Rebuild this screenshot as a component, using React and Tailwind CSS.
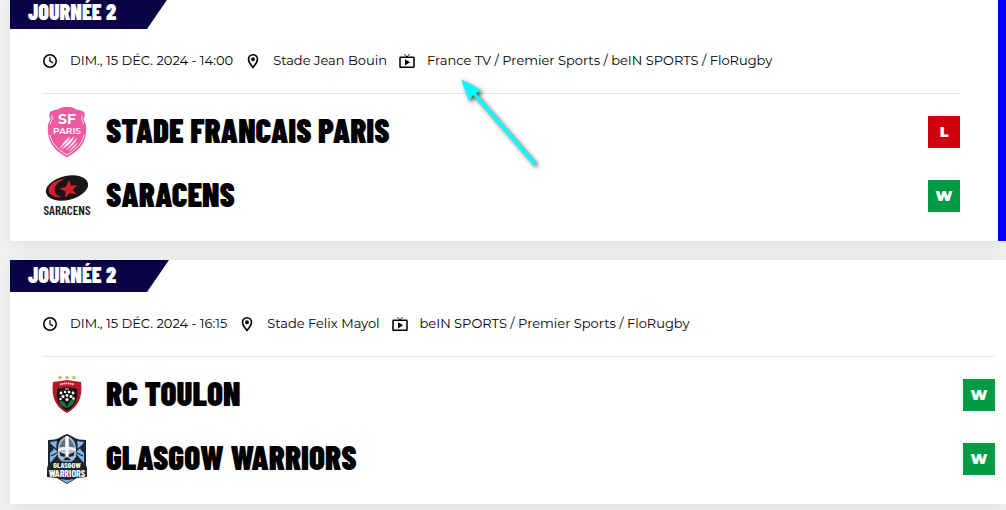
import React from 'react';
import clsx from 'clsx';

const ClockIcon = () => (
  <svg viewBox="0 0 24 24" className="size-4 shrink-0" fill="currentColor" aria-hidden="true">
    <path d="M12 1.500a10.500 10.500 0 1 0 0 21 10.500 10.500 0 0 0 0-21Zm0 18.700a8.200 8.200 0 1 1 0-16.400 8.200 8.200 0 0 1 0 16.400Z" />
    <path d="M11 6.500h1.900v5.300l4.200 2.600-.9 1.500-5.200-3.200Z" />
  </svg>
);

const PinIcon = () => (
  <svg viewBox="0 0 24 24" className="size-4 shrink-0" aria-hidden="true">
    <path
      d="M12 2.600c-4 0-6.700 3-6.700 6.600 0 4.600 6.700 12.300 6.700 12.300s6.700-7.700 6.700-12.300c0-3.600-2.700-6.600-6.700-6.600Z"
      fill="none"
      stroke="currentColor"
      strokeWidth="2.500"
    />
    <circle cx="12" cy="9.300" r="2.900" fill="currentColor" />
  </svg>
);

const TvIcon = () => (
  <svg viewBox="0 0 24 24" className="size-4 shrink-0" fill="none" stroke="currentColor" aria-hidden="true">
    <rect x="1.500" y="6.500" width="21" height="15" rx="1" strokeWidth="2.300" />
    <path d="M8 1.500l4 4.500 4-4.500" strokeWidth="1.300" />
    <path d="M9 9.300v9.400l7.500-4.700Z" fill="currentColor" stroke="none" />
  </svg>
);

const StadeFrancaisLogo = () => (
  <svg viewBox="0 0 48 52" className="h-13 w-12" role="img" aria-label="Stade Francais Paris">
    <path
      d="M24 1c4 0 7 .6 9 2.500 3 .3 5.500.8 8 2.500l1 4c-2 2-1.500 4 0 6 2 4 1 10 .5 14C41 39 34 46 24 51.500 14 46 7 39 5.500 30 5 26 4 20 6 16c1.500-2 2-4 0-6l1-4c2.500-1.700 5-2.200 8-2.500C17 1.600 20 1 24 1Z"
      fill="#ee5a9f"
    />
    <path
      d="M8.500 9c2 3-.5 6-1.300 9M39.500 9c-2 3 .5 6 1.300 9M7 29c1.500 8 7 14 17 20 10-6 15.500-12 17-20"
      fill="none"
      stroke="#fff"
      strokeWidth=".9"
    />
    <g fill="#fff" textAnchor="middle" className="font-['Montserrat','Liberation_Sans',sans-serif]">
      <text x="24" y="18" fontSize="14" fontWeight="700">SF</text>
      <text x="24" y="28" fontSize="9" fontWeight="600">PARIS</text>
    </g>
    <path
      d="M27 31c-2 4-5 7-10 11 3-4 5-8 10-11ZM31 31c-2 5-6 9-12 12 5-5 7-9 12-12ZM34 32c-2 5-6 9-11 12 4-4 7-8 11-12ZM34 37c-1 3-4 6-8 8 3-3 5-5 8-8Z"
      fill="#fff"
      stroke="#fff"
      strokeWidth=".3"
    />
  </svg>
);

const SaracensLogo = () => (
  <svg viewBox="0 0 48 48" className="size-12" role="img" aria-label="Saracens">
    <ellipse cx="24" cy="16" rx="21.500" ry="12" transform="rotate(-13 24 16)" fill="#181617" />
    <path
      d="M19 7C10 9 4 14 6 20c1 4 7 6 13 5-5-1-8-4-7-9 1-4 4-7 10-9Z"
      fill="#d31d30"
    />
    <path d="M26 8l2 5.800 6.500-.8-4.600 4.800 3.600 4.800-6.500-1.600-5 4.800.6-6.300-6-2.700 6.500-2Z" fill="#d31d30" />
    <text
      x="24"
      y="43"
      fontSize="13"
      textAnchor="middle"
      fill="#181617"
      className="font-['Barlow_Condensed','Roboto_Condensed',sans-serif] font-semibold"
    >
      SARACENS
    </text>
  </svg>
);

const ToulonLogo = () => (
  <svg viewBox="0 0 48 48" className="size-12" role="img" aria-label="RC Toulon">
    <g fill="#d6ad62">
      <path d="M17 4l.7 1.600 1.800.1-1.400 1.200.5 1.800-1.600-1-1.600 1 .5-1.800-1.400-1.200 1.800-.1Z" />
      <path d="M24 4l.7 1.600 1.800.1-1.400 1.200.5 1.800-1.600-1-1.600 1 .5-1.800-1.400-1.200 1.800-.1Z" />
      <path d="M31 4l.7 1.600 1.800.1-1.400 1.200.5 1.800-1.600-1-1.600 1 .5-1.800-1.400-1.200 1.800-.1Z" />
    </g>
    <path d="M10 11c5-1 10-1 14-2 4 1 9 1 14 2 1 10 1 23-14 31C9 34 9 21 10 11Z" fill="#b5162b" />
    <path d="M14 18c6-2 14-2 20 0 1 9 0 16-10 22-10-6-11-13-10-22Z" fill="#171314" />
    <path d="M17 13.500c4-1.500 10-1.500 14 0" fill="none" stroke="#f6d9d9" strokeWidth="1.800" strokeDasharray="1.500 .5" />
    <path d="M16 30c4-1 6 1 8 6 2-6 4-8 8-8-1 5-4 8-8 9-4-1-7-3-8-7Z" fill="#14733b" />
    <g fill="#fff">
      <circle cx="18" cy="22" r="1.400" />
      <circle cx="22" cy="21" r="1.200" />
      <circle cx="26" cy="21" r="1.300" />
      <circle cx="30" cy="22" r="1.400" />
      <circle cx="20" cy="25.500" r="1.500" />
      <circle cx="24" cy="24.500" r="1.400" />
      <circle cx="28" cy="25.500" r="1.500" />
      <circle cx="17.500" cy="28" r="1.200" />
      <circle cx="24" cy="28.500" r="1.600" />
      <circle cx="30.500" cy="27.500" r="1.200" />
    </g>
    <path d="M22 18h4" stroke="#d9c7c9" strokeWidth="1" />
  </svg>
);

const GlasgowLogo = () => (
  <svg viewBox="0 0 48 52" className="h-13 w-12" role="img" aria-label="Glasgow Warriors">
    <path
      d="M5 7c5 0 9-1 11-2 3-2 5-3 8-4 3 1 5 2 8 4 2 1 6 2 11 2v25l1 3v9l-10 1-10 6-10-6-10-1v-9l1-3Z"
      fill="#1b2632"
    />
    <path d="M7 9l7-1c-1 5-1 9 1 13-3 3-5 6-8 9V20l4-4ZM41 9l-7-1c1 5 1 9-1 13 3 3 5 6 8 9V20l-4-4Z" fill="#83b4e3" />
    <path d="M8 12l6 5M40 12l-6 5M8 23l6-3M40 23l-6-3" stroke="#1b2632" strokeWidth="1.300" />
    <path d="M15 16c0-8 4-11 9-13 5 2 9 5 9 13v8l-4 4-5-5-5 5-4-4Z" fill="#aec2d1" />
    <path d="M16 14c2-4 4-7 6-9v9ZM32 14c-2-4-4-7-6-9v9Z" fill="#5f7384" />
    <path d="M22.500 3h3v19l-1.500 3-1.500-3Z" fill="#fff" />
    <path d="M15 16l9-3 9 3v2l-9-2-9 2Z" fill="#f3f7fa" />
    <path d="M16.500 19l6 2.500-1 2.500-4-1ZM31.500 19l-6 2.500 1 2.500 4-1Z" fill="#1b2632" />
    <path d="M17 26l3 2h8l3-2" fill="none" stroke="#83b4e3" strokeWidth="1.500" />
    <path d="M17 46l7 4 7-4-7 1Z" fill="#83b4e3" />
    <g
      textAnchor="middle"
      fill="#fff"
      className="font-['Barlow_Condensed','Roboto_Condensed',sans-serif]"
    >
      <text x="24" y="35" fontSize="8" fontWeight="700">GLASGOW</text>
      <text x="24" y="44" fontSize="10" fontWeight="700">WARRIORS</text>
    </g>
  </svg>
);

const matches = [
  {
    id: 1,
    round: 'JOURNÉE 2',
    date: 'DIM., 15 DÉC. 2024 - 14:00',
    venue: 'Stade Jean Bouin',
    tv: 'France TV / Premier Sports / beIN SPORTS / FloRugby',
    teams: [
      { name: 'STADE FRANCAIS PARIS', Logo: StadeFrancaisLogo, result: 'L' },
      { name: 'SARACENS', Logo: SaracensLogo, result: 'W' },
    ],
  },
  {
    id: 2,
    round: 'JOURNÉE 2',
    date: 'DIM., 15 DÉC. 2024 - 16:15',
    venue: 'Stade Felix Mayol',
    tv: 'beIN SPORTS / Premier Sports / FloRugby',
    teams: [
      { name: 'RC TOULON', Logo: ToulonLogo, result: 'W' },
      { name: 'GLASGOW WARRIORS', Logo: GlasgowLogo, result: 'W' },
    ],
  },
];

const TeamRow = ({ name, Logo, result }) => (
  <li className="flex h-16 items-center">
    <div className="flex w-16 shrink-0 items-center pl-px">
      <Logo />
    </div>
    <h3 className="grow pb-1 font-['Barlow_Condensed','Roboto_Condensed','Liberation_Sans',sans-serif] text-[33px] leading-8 font-black text-black">
      {name}
    </h3>
    <span
      className={clsx(
        'flex size-8 shrink-0 items-center justify-center text-sm font-black text-white',
        result === 'W' ? 'bg-[#009a44]' : 'bg-[#d0000f]'
      )}
    >
      {result}
    </span>
  </li>
);

const MatchCard = ({ match, highlighted }) => (
  <article
    className={clsx(
      'bg-white pb-[13px] pl-8 shadow-[0_4px_20px_rgba(0,0,0,0.08)]',
      highlighted ? 'border-r-8 border-[#0000ff] pr-[38px]' : 'pr-[11px]'
    )}
  >
    <header className="-ml-8 flex h-8 w-[159px] items-start bg-[#0a0446] pt-0.5 pl-[18px] [clip-path:polygon(0_0,100%_0,137px_100%,0_100%)]">
      <h2 className="font-['Barlow_Condensed','Roboto_Condensed','Liberation_Sans',sans-serif] text-[22px] leading-6 font-black text-white">
        {match.round}
      </h2>
    </header>
    <div className="flex h-16 items-center gap-3 text-[13px] whitespace-nowrap">
      <ClockIcon />
      <time>{match.date}</time>
      <PinIcon />
      <span>{match.venue}</span>
      <TvIcon />
      <span>{match.tv}</span>
    </div>
    <ul className="border-t border-[#e3e4e6] pt-1.5">
      {match.teams.map((team) => (
        <TeamRow key={team.name} {...team} />
      ))}
    </ul>
  </article>
);

// Pointer drawn over the first card, towards the broadcaster list
const PointerArrow = () => (
  <svg
    viewBox="0 0 90 100"
    className="pointer-events-none absolute top-[76px] left-[456px] h-[100px] w-[90px] drop-shadow-[2px_2px_2px_rgba(0,0,0,0.7)]"
    aria-hidden="true"
  >
    <path d="M15 14L79 88" stroke="#00ffff" strokeWidth="3.500" />
    <path d="M5 3L26 15 18 17.500 13 25Z" fill="#00ffff" />
  </svg>
);

export default function App() {
  return (
    <main className="relative min-h-screen overflow-hidden bg-[#f1f2f4] pl-2.5 font-['Montserrat','Inter','Liberation_Sans',sans-serif] text-black">
      <div className="-mt-[3px] flex flex-col gap-[19px] pb-1.5">
        {matches.map((match, i) => (
          <MatchCard key={match.id} match={match} highlighted={i === 0} />
        ))}
      </div>
      <PointerArrow />
    </main>
  );
}
